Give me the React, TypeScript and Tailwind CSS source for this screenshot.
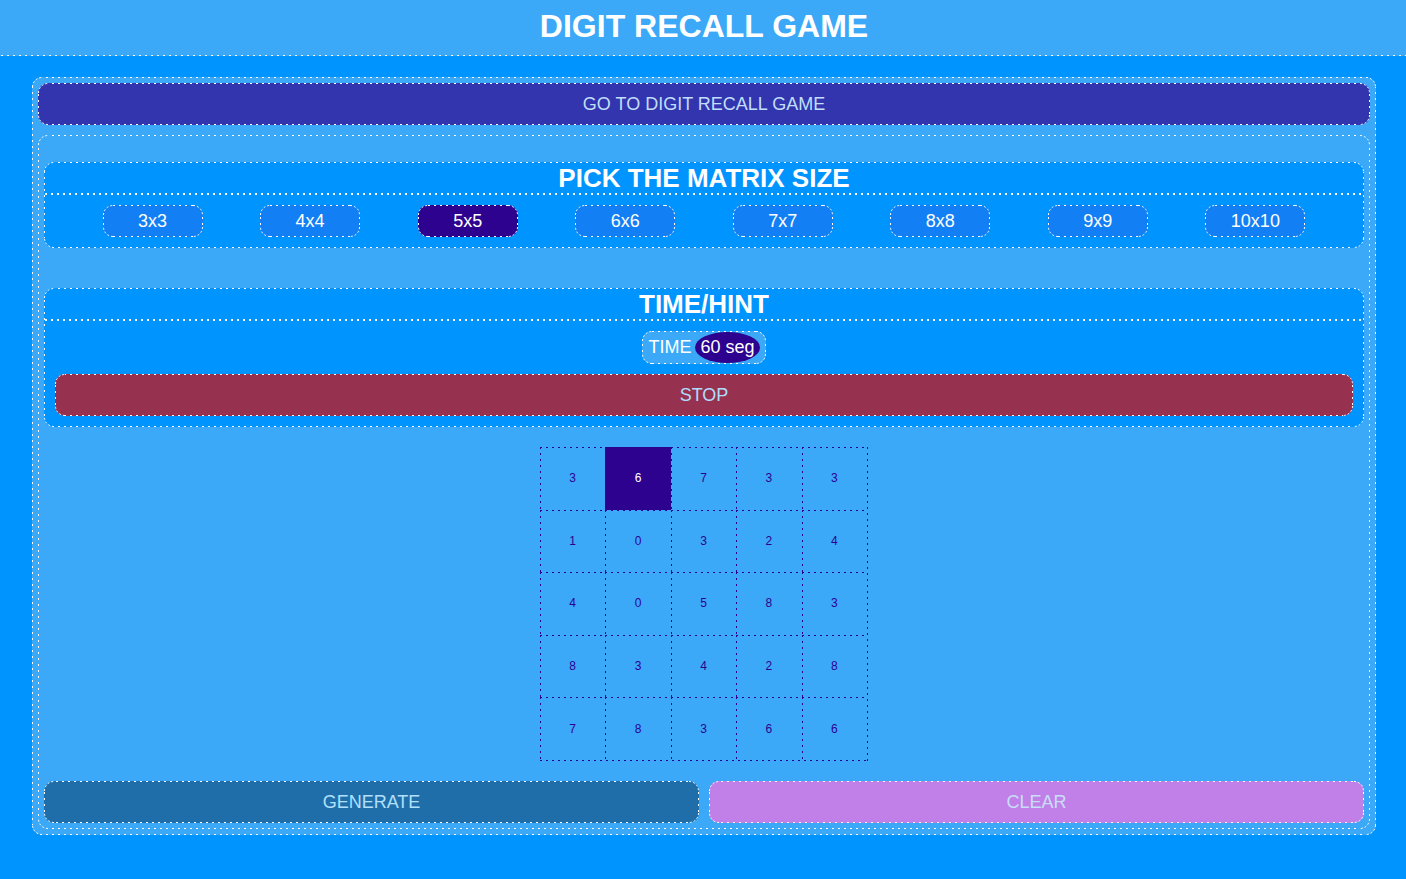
import { useState } from "react";

const SIZES = [3, 4, 5, 6, 7, 8, 9, 10];

const MATRIX = [
  [3, 6, 7, 3, 3],
  [1, 0, 3, 2, 4],
  [4, 0, 5, 8, 3],
  [8, 3, 4, 2, 8],
  [7, 8, 3, 6, 6],
];

// One-pixel rounded frame with widely spaced dashes (2px on, 4px off).
const dashedFrame =
  "rounded-[10px] border border-transparent bg-origin-border [border-image:url(data:image/svg+xml,%3Csvg%20xmlns=%22http://www.w3.org/2000/svg%22%20width=%2232%22%20height=%2232%22%20fill=%22none%22%20stroke=%22white%22%3E%3Cpath%20d=%22M12%20.5h2M18%20.5h2M12%2031.5h2M18%2031.5h2M.5%2012v2M.5%2018v2M31.5%2012v2M31.5%2018v2%22/%3E%3Cpath%20stroke-dasharray=%222%202%22%20d=%22M.5%2010A9.5%209.5%200%200%201%2010%20.5M22%20.5A9.5%209.5%200%200%201%2031.5%2010M31.5%2022A9.5%209.5%200%200%201%2022%2031.5M10%2031.5A9.5%209.5%200%200%201%20.5%2022%22/%3E%3C/svg%3E)_10_/_10px_repeat]";

const actionButton = `${dashedFrame} h-[42px] w-full text-center text-lg`;

// Dashed rules along the top and left edge of each matrix cell.
const cellLines =
  "bg-[image:repeating-linear-gradient(90deg,#2c028f_0_2px,transparent_2px_6px),repeating-linear-gradient(180deg,#2c028f_0_2px,transparent_2px_6px)] bg-[length:100%_1px,1px_100%] bg-[position:left_top,left_top] bg-no-repeat";

// The same rules along the right and bottom edge of the whole matrix.
const matrixLines =
  "bg-[image:repeating-linear-gradient(90deg,#2c028f_0_2px,transparent_2px_6px),repeating-linear-gradient(180deg,#2c028f_0_2px,transparent_2px_6px)] bg-[length:100%_1px,1px_100%] bg-[position:left_bottom,right_top] bg-no-repeat";

function SectionTitle({ children }: { children: string }) {
  return (
    <h2 className="bg-[image:repeating-linear-gradient(90deg,white_0_2px,transparent_2px_6px)] bg-[length:100%_2px] bg-bottom bg-no-repeat pb-0.5 text-center text-[26px] leading-[30px] font-bold">
      {children}
    </h2>
  );
}

export default function App() {
  const [size, setSize] = useState(5);

  return (
    <div className="min-h-screen bg-[#0094ff] font-['Liberation_Sans',Arial,sans-serif] text-white">
      <header className="bg-[#3ca9f8] bg-[image:repeating-linear-gradient(90deg,transparent_0_1px,white_1px_3px,transparent_3px_6px)] bg-[length:100%_1px] bg-bottom bg-no-repeat pt-[7px] pb-[11px] pl-0.5">
        <h1 className="text-center text-[32px] leading-[38px] font-bold">DIGIT RECALL GAME</h1>
      </header>

      <main
        className={`${dashedFrame} mt-[21px] mr-[30px] ml-8 flex flex-col gap-2.5 bg-[#3ca9f8] p-[5px]`}
      >
        <button type="button" className={`${actionButton} bg-[#3235ae] text-[#c1defa]`}>
          GO TO DIGIT RECALL GAME
        </button>

        <div className={`${dashedFrame} px-[5px] pt-[26px] pb-[5px]`}>
          <section className={`${dashedFrame} bg-[#0094ff]`}>
            <SectionTitle>PICK THE MATRIX SIZE</SectionTitle>
            <div className="flex justify-evenly py-2.5">
              {SIZES.map((n) => (
                <button
                  key={n}
                  type="button"
                  aria-pressed={n === size}
                  onClick={() => setSize(n)}
                  className={`${dashedFrame} h-8 w-[100px] text-lg leading-[30px] ${
                    n === size ? "bg-[#2c028f]" : "bg-[#137ff5]"
                  }`}
                >
                  {`${n}x${n}`}
                </button>
              ))}
            </div>
          </section>

          <section className={`${dashedFrame} mt-10 bg-[#0094ff]`}>
            <SectionTitle>TIME/HINT</SectionTitle>
            <div className="flex flex-col items-center gap-2.5 p-2.5">
              <p
                className={`${dashedFrame} flex h-[33px] items-center gap-1 bg-[#3ca9f8] px-[5px] text-lg leading-[31px]`}
              >
                TIME
                <span className="rounded-[50%] bg-[#2c028f] px-[5px]">60 seg</span>
              </p>
              <button type="button" className={`${actionButton} bg-[#963250] text-[#b1ddfc]`}>
                STOP
              </button>
            </div>
          </section>

          <table
            className={`${matrixLines} mx-auto my-5 h-[314px] w-[328px] table-fixed border-separate border-spacing-0 pr-px pb-px text-center text-xs text-[#2c028f]`}
          >
            <tbody>
              {MATRIX.map((row, r) => (
                <tr key={r}>
                  {row.map((digit, c) => (
                    <td
                      key={c}
                      className={`${cellLines} p-0 ${
                        r === 0 && c === 1 ? "bg-[#2c028f] text-white" : ""
                      }`}
                    >
                      {digit}
                    </td>
                  ))}
                </tr>
              ))}
            </tbody>
          </table>

          <div className="flex gap-2.5">
            <button type="button" className={`${actionButton} bg-[#1f6eaa] text-[#b1e0fc]`}>
              GENERATE
            </button>
            <button type="button" className={`${actionButton} bg-[#c180e8] text-[#c8def8]`}>
              CLEAR
            </button>
          </div>
        </div>
      </main>
    </div>
  );
}
